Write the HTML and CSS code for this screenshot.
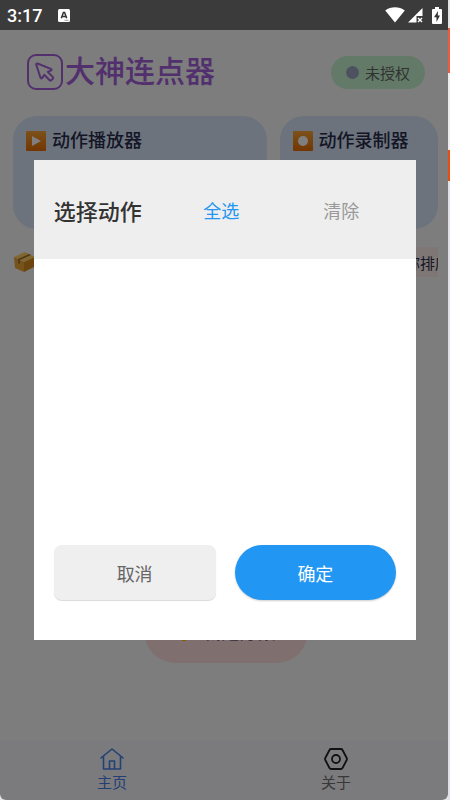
FILE: index.html
```html
<!DOCTYPE html>
<html lang="zh-CN">
<head>
    <meta charset="UTF-8">
    <meta name="viewport" content="width=device-width, initial-scale=1.0">
    <title>大神连点器</title>
    <link rel="stylesheet" href="styles.css">
</head>
<body>
    <div class="screen">
        <div class="phone">
            <div class="status-bar">
                <span class="time">3:17</span>
                <svg class="app-badge" width="12" height="13" viewBox="0 0 12 13">
                    <rect width="12" height="13" rx="1.5" fill="#fff"/>
                    <path d="M3.3 9.2 5.4 3.5h1.2l2.1 5.7M4.2 7.4h3.6" fill="none" stroke="#333" stroke-width="1.5"/>
                    <path d="M6.5 11.3h4" stroke="#999" stroke-width="1"/>
                </svg>
                <div class="signals">
                    <svg width="20" height="16" viewBox="0 0 20 16">
                        <path d="M10 15.5 0.2 3.6C6 -.8 14 -.8 19.8 3.6z" fill="#fff"/>
                    </svg>
                    <svg width="15" height="15" viewBox="0 0 15 15">
                        <path d="M0 14.500 14.500 0v8H8.500v6.500z" fill="#fff"/>
                        <path d="m10 10 4 4m0-4-4 4" stroke="#fff" stroke-width="1.4"/>
                    </svg>
                    <svg class="battery" width="10" height="17" viewBox="0 0 10 17">
                        <path d="M3 0h4v2h2q1 0 1 1v13q0 1-1 1H1q-1 0-1-1V3q0-1 1-1h2z" fill="#fff"/>
                        <path d="M6 4 2 10.200h2.500V15L8 8.500H5.800z" fill="#333"/>
                    </svg>
                </div>
            </div>

            <header class="header">
                <svg width="36" height="36" viewBox="0 0 36 36" fill="none" stroke="#a460dc" stroke-width="2" stroke-linejoin="round">
                    <rect x="1" y="1" width="34" height="34" rx="8"/>
                    <path d="M10.500 9.500q-1.500-.4-1.200 1.200l4.200 13q.8 1.300 1.700.2l2.200-3 5.200 5.400q.8.700 1.600 0l1.700-1.600q.7-.8 0-1.600l-5.100-5.200 3.300-1.500q1-.8-.2-1.500z"/>
                </svg>
                <h1>大神连点器</h1>
                <div class="license"><span class="dot"></span>未授权</div>
            </header>

            <main class="content">
                <div class="cards">
                    <section class="card">
                        <h2>
                            <svg width="20" height="20" viewBox="0 0 20 20">
                                <rect width="20" height="20" rx="1" fill="url(#orange)"/>
                                <path d="m6 5 9 5-9 5z" fill="#fff"/>
                                <defs>
                                    <linearGradient id="orange" x2="0" y2="1">
                                        <stop stop-color="#f9a438"/>
                                        <stop offset="1" stop-color="#e86c00"/>
                                    </linearGradient>
                                </defs>
                            </svg>
                            动作播放器
                        </h2>
                    </section>
                    <section class="card">
                        <h2>
                            <svg width="20" height="20" viewBox="0 0 20 20">
                                <rect width="20" height="20" rx="1" fill="url(#orange)"/>
                                <circle cx="10" cy="10" r="5" fill="#fff"/>
                            </svg>
                            动作录制器
                        </h2>
                    </section>
                </div>
                <div class="list-bar">
                    <svg width="22" height="22" viewBox="0 0 22 22">
                        <path d="M1 6 12 1l10 5-11 5z" fill="#ffd060"/>
                        <path d="m1 6 10 5v10L2 17z" fill="#eda634"/>
                        <path d="m22 6-11 5v10l10-5z" fill="#d88a1c"/>
                        <path d="m5 8 11-5 2 1-11 5v4l-2-1z" fill="#a87038"/>
                    </svg>
                    <button class="sort" type="button">按名称排序</button>
                </div>
                <button class="create" type="button">
                    <svg width="16" height="20" viewBox="0 0 16 20">
                        <path d="M8 2v18M1 10h14" stroke="#ffc400" stroke-width="4"/>
                    </svg>
                    新建方案
                </button>
            </main>

            <nav class="tabs">
                <a class="tab active" href="#home">
                    <svg width="24" height="22" viewBox="0 0 24 22" fill="none" stroke="currentColor" stroke-width="1.6" stroke-linejoin="round" stroke-linecap="round">
                        <path d="M1 10 12 1l11 9M3.500 8.200V21h17V8.200M9.500 21v-8h5v8"/>
                    </svg>
                    主页
                </a>
                <a class="tab" href="#about">
                    <svg width="24" height="22" viewBox="0 0 24 22" fill="none" stroke="#222" stroke-width="1.8" stroke-linejoin="round">
                        <path d="M7 1h10q1 0 1.500 1l4.200 8q.5 1 0 2l-4.200 8q-.5 1-1.500 1H7q-1 0-1.500-1l-4.200-8q-.5-1 0-2l4.200-8Q6 1 7 1z"/>
                        <circle cx="12" cy="11" r="4"/>
                    </svg>
                    关于
                </a>
            </nav>
        </div>
        <div class="edge"></div>

        <div class="overlay"></div>
        <div class="dialog-wrap">
            <div class="dialog" role="dialog" aria-labelledby="dialog-title">
                <div class="dialog-header">
                    <h2 id="dialog-title">选择动作</h2>
                    <button class="link select-all" type="button">全选</button>
                    <button class="link" type="button">清除</button>
                </div>
                <div class="dialog-body"></div>
                <div class="dialog-footer">
                    <button class="btn cancel" type="button">取消</button>
                    <button class="btn confirm" type="button">确定</button>
                </div>
            </div>
        </div>
    </div>
</body>
</html>
```
FILE: styles.css
```css
* {
    margin: 0;
    padding: 0;
    box-sizing: border-box;
    font-family: Roboto, "Noto Sans CJK SC", sans-serif;
}

button {
    border: none;
    background: none;
    cursor: pointer;
}

svg {
    flex: none;
}

.screen {
    position: relative;
    display: flex;
    min-height: 100vh;
    background-color: #e4e4e4;
}

.phone {
    flex: 1;
    min-width: 0;
    display: flex;
    flex-direction: column;
    background-color: #fafafa;
    border-radius: 0 0 6px 6px;
}

/* Window edge on the right */
.edge {
    width: 2px;
    background: linear-gradient(#e4e4e4 28px, #ee5a3c 28px, #ee5a3c 73px, #ececec 73px, #ececec 150px, #e84e10 150px, #e84e10 181px, #e0e0e6 181px);
}

/* Status Bar */
.status-bar {
    position: relative;
    z-index: 2;
    display: flex;
    align-items: center;
    height: 30px;
    padding: 0 6px 0 7px;
    background-color: #3b3b3b;
    color: #fff;
}

.time {
    font-size: 18px;
    font-weight: 500;
}

.app-badge {
    margin-left: 16px;
}

.signals {
    display: flex;
    align-items: center;
    gap: 3px;
    margin-left: auto;
}

.battery {
    margin-left: 6px;
}

/* Header */
.header {
    display: flex;
    align-items: center;
    height: 84px;
    padding: 0 23px 0 27px;
}

.header h1 {
    margin-left: 2px;
    font-size: 30px;
    line-height: 36px;
    font-weight: 500;
    color: #a460dc;
}

.license {
    display: flex;
    align-items: center;
    gap: 6px;
    height: 33px;
    margin-left: auto;
    padding: 0 15px;
    border-radius: 17px;
    background-color: #c8f5d2;
    font-size: 15px;
    color: #606860;
}

.dot {
    width: 13px;
    height: 13px;
    border-radius: 50%;
    background-color: #9ca3bf;
}

/* Content */
.content {
    flex: 1;
    display: flex;
    flex-direction: column;
    padding: 2px 10px 0 13px;
}

.cards {
    display: grid;
    grid-template-columns: 8fr 5fr;
    gap: 13px;
}

.card {
    height: 113px;
    padding: 12px 13px;
    border-radius: 24px;
    background-color: #d8e6f8;
}

.card h2 {
    display: flex;
    align-items: center;
    gap: 6px;
    font-size: 18px;
    line-height: 26px;
    font-weight: 500;
    color: #282c4c;
    white-space: nowrap;
}

.list-bar {
    display: flex;
    align-items: center;
    justify-content: space-between;
    margin-top: 18px;
}

.sort {
    width: 75px;
    height: 30px;
    padding-left: 12px;
    overflow: hidden;
    background-color: #ffecec;
    font-size: 15px;
    color: #282c4c;
    text-align: left;
    white-space: nowrap;
}

.create {
    display: flex;
    align-items: center;
    justify-content: center;
    gap: 12px;
    width: 164px;
    height: 64px;
    margin: auto auto 77px;
    border-radius: 32px;
    background-color: #ffdede;
    font-size: 18px;
    font-weight: 500;
    color: #282c4c;
}

/* Bottom Tabs */
.tabs {
    display: flex;
    height: 60px;
    border-radius: 0 0 6px 6px;
    background-color: #f6f6fa;
}

.tab {
    flex: 1;
    display: flex;
    flex-direction: column;
    align-items: center;
    padding-top: 8px;
    gap: 2px;
    font-size: 15px;
    line-height: 22px;
    color: #707070;
    text-decoration: none;
}

.tab.active {
    color: #4480ea;
}

/* Dialog */
.overlay {
    position: absolute;
    inset: 0 2px 0 0;
    border-radius: 0 0 6px 6px;
    background-color: rgba(0, 0, 0, 0.5);
}

.dialog-wrap {
    position: absolute;
    inset: 0;
    z-index: 3;
    display: flex;
    align-items: center;
    justify-content: center;
}

.dialog {
    display: flex;
    flex-direction: column;
    width: 85%;
    height: 60%;
    background-color: #fff;
}

.dialog-header {
    display: flex;
    align-items: center;
    height: 99px;
    padding: 0 15px 0 20px;
    background-color: #eee;
}

.dialog-header h2 {
    flex: 1;
    font-size: 22px;
    font-weight: 500;
    color: #333;
    white-space: nowrap;
}

.link {
    width: 120px;
    height: 48px;
    font-size: 18px;
    color: #999;
}

.select-all {
    color: #2196f3;
}

.dialog-body {
    flex: 1;
}

.dialog-footer {
    display: flex;
    gap: 19px;
    padding: 0 20px 40px;
}

.btn {
    flex: 1;
    height: 55px;
    font-size: 18px;
}

.cancel {
    border-radius: 8px;
    background-color: #efefef;
    box-shadow: 0 1px 1px rgba(0, 0, 0, 0.15);
    color: #666;
}

.confirm {
    border-radius: 28px;
    background-color: #2196f3;
    box-shadow: 0 1px 2px rgba(0, 0, 0, 0.2);
    color: #fff;
}
```
